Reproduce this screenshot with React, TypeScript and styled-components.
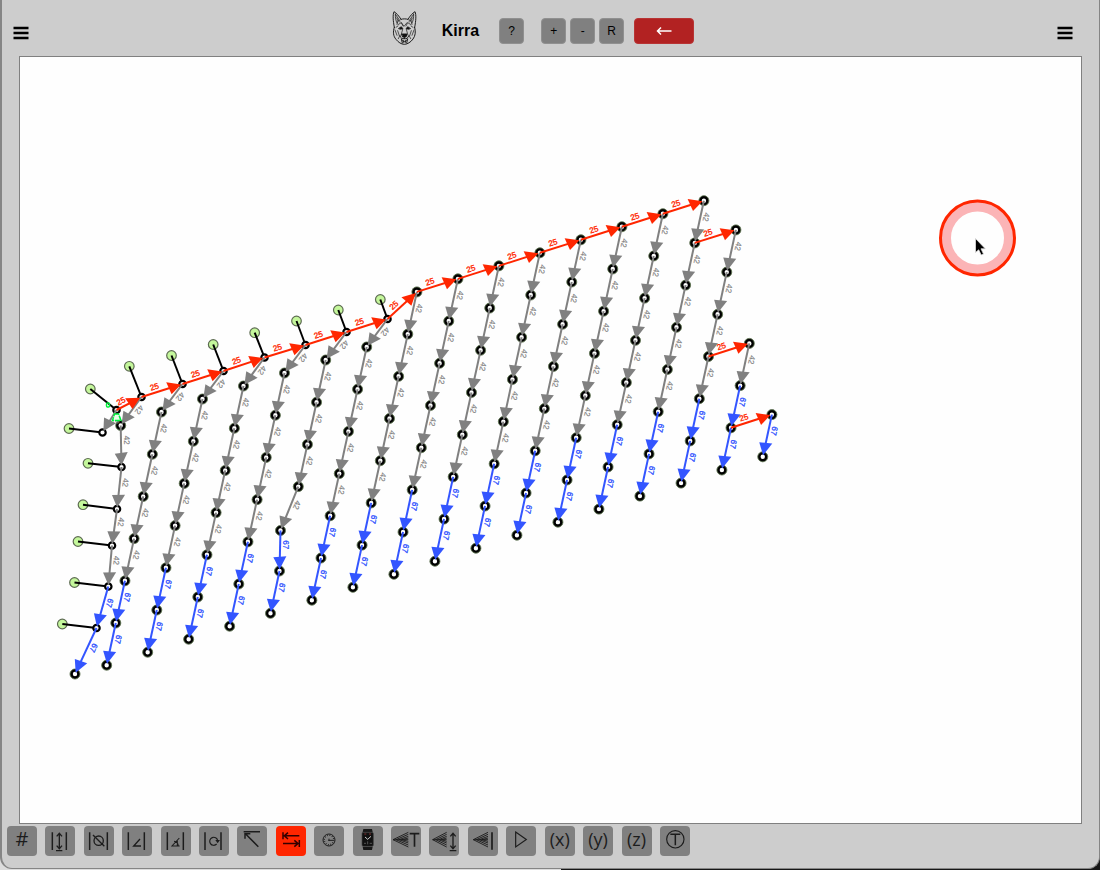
import React from "react";
import styled, { createGlobalStyle } from "styled-components";

const GlobalStyle = createGlobalStyle`
  * { box-sizing: border-box; }
  body {
    margin: 0;
    background: linear-gradient(to right, #dcdcdc 51%, #161616 51%);
    font-family: "Liberation Sans", Arial, sans-serif;
  }
`;

const Frame = styled.div`
  display: flex;
  flex-direction: column;
  height: calc(100vh - 1px);
  background: #cdcdcd;
  border: solid #858585;
  border-width: 0 1px 1px 2px;
  border-radius: 0 0 12px 12px;
  overflow: hidden;
`;

const Header = styled.header`
  display: flex;
  align-items: center;
  justify-content: space-between;
  height: 56px;
  flex: none;
  padding: 5px 26px 0 11px;
`;

const Brand = styled.div`
  display: flex;
  align-items: center;
  > svg { margin-bottom: 6px; }
`;

const Title = styled.h1`
  margin: 0 20px 0 25px;
  font-size: 16px;
  line-height: 20px;
  color: #000;
`;

const MenuButton = styled.button`
  width: 16px;
  height: 16px;
  margin-top: 4px;
  padding: 0;
  border: 0;
  background: none;
  svg { display: block; }
`;

const KeyGroup = styled.div`
  display: flex;
  gap: 4px;
  margin: 0 10px 0 17px;
`;

const KeyButton = styled.button<{ $danger?: boolean }>`
  display: flex;
  align-items: center;
  justify-content: center;
  width: ${(p) => (p.$danger ? 60 : 25)}px;
  height: 26px;
  padding: 0;
  border: 1px solid ${(p) => (p.$danger ? "#b83434" : "#909090")};
  border-radius: 4px;
  background: ${(p) => (p.$danger ? "#b22222" : "#808080")};
  color: ${(p) => (p.$danger ? "#fff" : "#000")};
  font: 12px/16px "Liberation Sans", Arial, sans-serif;
`;

const Board = styled.main`
  flex: 1;
  min-height: 0;
  margin: 0 17px 0 17px;
  border: 1px solid #808080;
  background: #fefefe;
  svg { display: block; width: 100%; height: 100%; }
`;

const Toolbar = styled.nav`
  display: flex;
  justify-content: space-between;
  flex: none;
  max-width: 688px;
  height: 44px;
  padding: 2px 0 0 5px;
`;

const ToolButton = styled.button<{ $active?: boolean }>`
  display: flex;
  align-items: center;
  justify-content: center;
  width: 30px;
  height: 30px;
  padding: 0 0 4px;
  border: 0;
  border-radius: 4px;
  background: ${(p) => (p.$active ? "#ff2600" : "#808080")};
  color: #1c1c1c;
  font-family: "Open Sans", "Noto Sans", sans-serif;
  font-size: 18px;
  line-height: 20px;
  svg { display: block; flex: none; width: 30px; height: 30px; margin-bottom: -4px; }
`;

const Hash = styled.span`
  font-size: 20px;
`;

type Pt = [number, number];
type Kind = "red" | "grey" | "blue";

const COLOR: Record<Kind, string> = { red: "#ff2600", grey: "#808080", blue: "#3355ff" };
const DELAY: Record<Kind, string> = { red: "25", grey: "42", blue: "67" };
const STEP: Pt = [-9.14, 42.2];

const run = (x: number, y: number, count: number): Pt[] =>
  Array.from({ length: count }, (_, i) => [x + STEP[0] * i, y + STEP[1] * i]);

interface Row {
  collar?: Pt;
  holes: Pt[];
  late: number;
}

const rows: Row[] = [
  { collar: [182.5, 384], holes: run(161.5, 412, 7), late: 2 },
  { collar: [223.5, 371], holes: run(202.5, 399, 7), late: 2 },
  { collar: [264.5, 357.5], holes: run(243.5, 386, 7), late: 2 },
  { collar: [305.5, 345], holes: run(284.5, 373, 7), late: 2 },
  { collar: [346.5, 332], holes: [...run(325.7, 360, 4), [280.5, 530.5], [279.5, 571], [270.5, 613.3]], late: 2 },
  { collar: [387.5, 319], holes: run(366.7, 347, 7), late: 2 },
  ...Array.from({ length: 8 }, (_, i) => ({ holes: run(416.9 + i * 41, 291.9 - i * 13.03, 8), late: 2 })),
  { holes: run(735.9, 229.9, 7), late: 2 },
  { holes: run(749.3, 343.4, 4), late: 2 },
  { holes: run(771.9, 414.6, 2), late: 1 },
];

const edge: Pt[] = [
  [141.5, 397], [120.7, 425.5], [121.5, 467], [117, 509],
  [112, 545.5], [108.3, 586.5], [96.5, 628], [75, 674],
];

const spine: Pt[] = [
  [116.5, 410], [141.5, 397],
  ...rows.slice(0, 14).map((r) => r.collar ?? r.holes[0]),
];

/* angled holes: toe marker first, collar second */
const angled: [Pt, Pt][] = [
  [[90.3, 389], [116.5, 410]],
  [[129.3, 366.3], [141.5, 397]],
  [[171.5, 355.5], [182.5, 384]],
  [[213.2, 344.5], [223.5, 371]],
  [[254.7, 332.7], [264.5, 357.5]],
  [[296.5, 321], [305.5, 345]],
  [[338.3, 310], [346.5, 332]],
  [[380.3, 299.5], [387.5, 319]],
  [[69, 428.5], [102.5, 432.5]],
  [[88, 463.3], [121.5, 467]],
  [[83, 504.7], [117, 509]],
  [[78, 541.5], [112, 545.5]],
  [[74.5, 582.5], [108.3, 586.5]],
  [[62.3, 624], [96.5, 628]],
];

interface Link { from: Pt; to: Pt; kind: Kind }

const chain = (pts: Pt[], late: number): Link[] =>
  pts.slice(1).map((to, i) => ({
    from: pts[i],
    to,
    kind: i >= pts.length - 1 - late ? "blue" : "grey",
  }));

const links: Link[] = [
  { from: [116.5, 410], to: [102.5, 432.5], kind: "grey" },
  ...chain(edge, 2),
  ...rows.flatMap((r) => chain(r.collar ? [r.collar, ...r.holes] : r.holes, r.late)),
  ...spine.slice(1).map((to, i): Link => ({ from: spine[i], to, kind: "red" })),
  { from: rows[13].holes[1], to: rows[14].holes[0], kind: "red" },
  { from: rows[14].holes[3], to: rows[15].holes[0], kind: "red" },
  { from: rows[15].holes[2], to: rows[16].holes[0], kind: "red" },
];

const vertical: Pt[] = [...rows.flatMap((r) => r.holes), edge[1], edge[7]];

function Arrow({ from, to, kind }: Link) {
  const dx = to[0] - from[0];
  const dy = to[1] - from[1];
  const len = Math.hypot(dx, dy);
  const angle = (Math.atan2(dy, dx) * 180) / Math.PI;
  return (
    <g transform={`translate(${from[0]} ${from[1]}) rotate(${angle})`} fill={COLOR[kind]} stroke={COLOR[kind]}>
      <line x2={len - 6} strokeWidth="2" />
      <path d={`M${len - 1.500} 0L${len - 15} -6.500L${len - 13.500} 6.500z`} stroke="none" />
      <text x={len / 2 - 6} y="-3" fontSize="8" textAnchor="middle" strokeWidth={kind === "grey" ? 0.15 : 0.35}>
        {DELAY[kind]}
      </text>
    </g>
  );
}

function Pattern() {
  return (
    <svg viewBox="20 57 1061 766" role="img" aria-label="Blast pattern" fontFamily="Liberation Sans, Arial, sans-serif">
      {vertical.map(([x, y], i) => (
        <g key={i}>
          <circle cx={x} cy={y} r="5" fill="#2b3623" stroke="#5c7050" strokeWidth="0.9" />
          <circle cx={x} cy={y} r="3.3" fill="#fff" stroke="#000" strokeWidth="2.200" />
        </g>
      ))}
      {angled.map(([toe, collar], i) => (
        <g key={i}>
          <circle cx={toe[0]} cy={toe[1]} r="4.8" fill="#c4f79b" stroke="#5d6b52" strokeWidth="1.2" />
          <line x1={toe[0]} y1={toe[1]} x2={collar[0]} y2={collar[1]} stroke="#000" strokeWidth="2" />
          <circle cx={collar[0]} cy={collar[1]} r="3.2" fill="#fff" stroke="#000" strokeWidth="2.200" />
        </g>
      ))}
      {links.map((l, i) => <Arrow key={i} {...l} />)}
      <g stroke="#00f03c" fill="none">
        <path d="M114.500 414h4l2.500 6.500h-8.500z" strokeWidth="1.500" strokeDasharray="5 1" fill="#e9ffe9" />
        <rect x="106.500" y="403" width="3" height="4" rx="1" strokeWidth="1.400" />
      </g>
      <circle cx="977.5" cy="238" r="31.5" fill="none" stroke="#fbb4b6" strokeWidth="10" />
      <circle cx="977.5" cy="238" r="37" fill="none" stroke="#ff2600" strokeWidth="3" />
      <path d="M975.500 238.500v14l3.200 -2.700 2.500 5.200 2.300 -1 -2.500 -5.200h4.300z" fill="#000" stroke="#ddd" strokeWidth="0.8" />
    </svg>
  );
}

function MenuIcon() {
  return (
    <svg width="16" height="16" viewBox="0 0 16 16">
      <path d="M0.500 3h15M0.500 8h15M0.500 13h15" stroke="#000" strokeWidth="2.400" />
    </svg>
  );
}

function DogLogo() {
  return (
    <svg width="25" height="35" viewBox="0 0 75 105" fill="none" stroke="#111" strokeWidth="2.800" strokeLinecap="round" strokeLinejoin="round" aria-hidden="true">
      <path d="M7 52C3 32 2 14 6 5c8 5 15 13 21 23M68 52c4-20 5-38 1-47-8 5-15 13-21 23" />
      <path d="M27 28c6-2 15-2 21 0M7 52c-5 13-3 27 5 36 7 9 16 15 25 15s20-7 26-16c7-9 9-22 5-35" />
      <path d="M10 12c0 10 1 20 5 27M65 12c0 10-1 20-5 27M11 14l13 19M64 14L51 33M14 24l8 12M61 24l-8 12M18 31l-3 12M57 31l3 12" strokeWidth="2.200" />
      <path d="M18 44l10-6 5 10M57 44l-10-6-5 10M12 52l6-4M63 52l-6-4M28 38l8 11 9-11" strokeWidth="2" />
      <path d="M20 55l8-5 5 6-7 2zM55 55l-8-5-5 6 7 2z" fill="#111" strokeWidth="2" />
      <path d="M9 60l6 16M66 60l-6 16M17 62l5 15M58 62l-5 15M32 58l-5 18M43 58l5 18M23 78l-4 8M52 78l4 8" strokeWidth="2" />
      <path d="M30 72h15l-3 9h-9z" fill="#111" />
      <path d="M37 81v5M24 78c2 7 7 9 13 8 6 1 11-1 13-8M28 87l3 12M47 87l-3 12M31 90c3 7 10 7 13 0M34 92v5M40 92v5" strokeWidth="2.800" />
    </svg>
  );
}

const bars = (a: number, b: number) => `M${a} 19v53M${b} 19v53`;
const fan = (x: number, w: number) =>
  `M${x} 41l${w} -22M${x} 41l${w} 22M${x + 9} 41l${w - 9} -16M${x + 9} 41l${w - 9} 16M${x + 18} 41l${w - 18} -10M${x + 18} 41l${w - 18} 10M${x + 26} 41l${w - 26} -5M${x + 26} 41l${w - 26} 5M${x} 41h${w}`;

function Glyph({ children }: { children: React.ReactNode }) {
  return (
    <svg viewBox="0 0 90 90" fill="none" stroke="#1c1c1c" strokeWidth="4" aria-hidden="true">
      {children}
    </svg>
  );
}

interface Tool { label: string; icon: React.ReactNode; active?: boolean }

const tools: Tool[] = [
  { label: "Hole number", icon: <Hash>#</Hash> },
  { label: "Hole length", icon: <Glyph><path d={bars(22, 64)} strokeWidth="4.500" /><path d="M43 22v46M35 31l8-9 8 9M35 59l8 9 8-9M33 74h19" /></Glyph> },
  { label: "Hole diameter", icon: <Glyph><path d={bars(17, 70)} strokeWidth="4.500" /><circle cx="44" cy="44" r="14" /><path d="M27 27l34 34" /></Glyph> },
  { label: "Hole angle", icon: <Glyph><path d={bars(19, 67)} strokeWidth="4.500" /><path d="M54 39L35 60h22" /></Glyph> },
  { label: "Hole dip", icon: <Glyph><path d={bars(19, 67)} strokeWidth="4.500" /><path d="M55 36L33 60h23M39 46c8 1 12 6 13 14M49 42v18" strokeWidth="3.200" /></Glyph> },
  { label: "Hole bearing", icon: <Glyph><path d={bars(18, 66)} strokeWidth="4.500" /><path d="M53 54a12 12 0 1 1 3-10" strokeWidth="3.500" /><path d="M49 42h14l-7 10z" fill="#1c1c1c" stroke="none" /></Glyph> },
  { label: "Tie connector", icon: <Glyph><path d="M20 17h49M64 62L26 24M24 38V23h16" strokeWidth="4.500" /></Glyph> },
  { label: "Delay direction", active: true, icon: <Glyph><path d="M21 19v21M70 29.500H25M36 20l-11 9.500 11 9.500M70 42v21M21 52.500h45M55 43l11 9.500-11 9.500" stroke="#300" strokeWidth="4.500" /></Glyph> },
  { label: "Firing times", icon: <Glyph><circle cx="45" cy="42" r="18" strokeWidth="3" /><circle cx="45" cy="42" r="14" strokeWidth="3.500" strokeDasharray="2.500 4.800" /><path d="M43 43h14M45 38v7" strokeWidth="3" /></Glyph> },
  {
    label: "Timing window",
    icon: (
      <Glyph>
        <path d="M31 9h26l2 9H29zM31 72h26l2-10H29z" fill="#181818" stroke="none" />
        <rect x="27" y="19" width="34" height="42" rx="4" fill="#111" stroke="#444" strokeWidth="2" />
        <path d="M36 33l8 7 10-9" stroke="#eee" strokeWidth="2.500" />
        <path d="M33 52h6M50 52h7M44 46v9" stroke="#777" strokeWidth="2" />
        <path d="M34 24h6M48 24h6" stroke="#b44" strokeWidth="2" />
      </Glyph>
    ),
  },
  { label: "Contour times", icon: <Glyph><path d={fan(6, 46)} strokeWidth="2.800" /><path d="M56 23h29M70.500 23v39" strokeWidth="5" /></Glyph> },
  { label: "Contour length", icon: <Glyph><path d={fan(11, 42)} strokeWidth="2.800" /><path d="M72 22v46M64 31l8-9 8 9M64 59l8 9 8-9M62 74h20" /></Glyph> },
  { label: "Contour hole", icon: <Glyph><path d={fan(16, 44)} strokeWidth="2.800" /><path d="M72 19v52" strokeWidth="5" /></Glyph> },
  { label: "Play", icon: <Glyph><path d="M29 18l32 22.500L29 63z" strokeWidth="3.500" /></Glyph> },
  { label: "X values", icon: "(x)" },
  { label: "Y values", icon: "(y)" },
  { label: "Z values", icon: "(z)" },
  { label: "Text", icon: <Glyph><circle cx="46" cy="40" r="26" strokeWidth="3.500" /><path d="M31 25h30M46 25v33" strokeWidth="4.500" /></Glyph> },
];

export default function App() {
  return (
    <>
      <GlobalStyle />
      <Frame>
        <Header>
          <MenuButton aria-label="Open left menu"><MenuIcon /></MenuButton>
          <Brand>
            <DogLogo />
            <Title>Kirra</Title>
            <KeyButton aria-label="Help">?</KeyButton>
            <KeyGroup>
              <KeyButton aria-label="Zoom in">+</KeyButton>
              <KeyButton aria-label="Zoom out">-</KeyButton>
              <KeyButton aria-label="Reset view">R</KeyButton>
            </KeyGroup>
            <KeyButton $danger aria-label="Undo">
              <svg width="16" height="10" viewBox="0 0 16 10" fill="none" stroke="#fff" strokeWidth="1.500">
                <path d="M15.500 5H1.500M5 1.500L1.500 5 5 8.500" />
              </svg>
            </KeyButton>
          </Brand>
          <MenuButton aria-label="Open right menu"><MenuIcon /></MenuButton>
        </Header>
        <Board><Pattern /></Board>
        <Toolbar aria-label="Display options">
          {tools.map((t) => (
            <ToolButton key={t.label} $active={t.active} aria-label={t.label}>{t.icon}</ToolButton>
          ))}
        </Toolbar>
      </Frame>
    </>
  );
}
